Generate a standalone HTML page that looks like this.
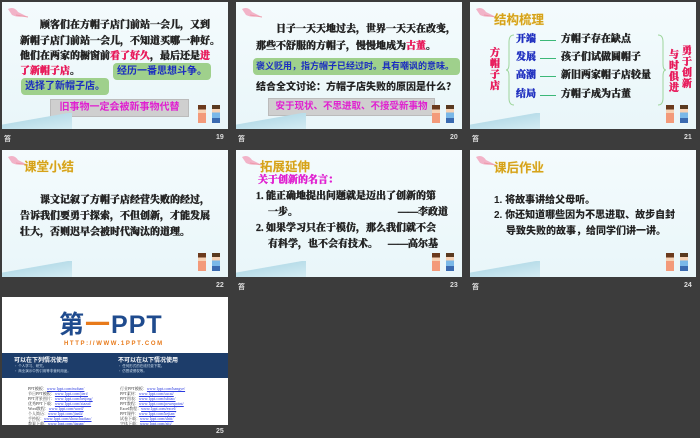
<!DOCTYPE html>
<html><head><meta charset="utf-8"><style>
*{margin:0;padding:0;box-sizing:border-box}
body{width:700px;height:438px;background:#3c3c3c;position:relative;overflow:hidden;font-family:"Liberation Serif","Noto Serif CJK SC",serif}
.s{position:absolute;width:226px;height:127px;background:linear-gradient(180deg,#f4fbfd,#e9f6f9);overflow:hidden}
.s div,.s span.a{position:absolute;white-space:nowrap}
.t{font-size:10px;font-weight:900;color:#222;line-height:12px;-webkit-text-stroke:0.35px currentColor}
.r{color:#e8195a}
.m{color:#e020d0}
.b{color:#2030c0}
.g{background:#9fd08c;border-radius:4px;font-size:10px;font-weight:bold;color:#1a2cc0;font-family:"Liberation Sans","Noto Sans CJK SC",sans-serif;line-height:17px;padding:0 4px}
.gb{background:#cfcfcf;border:1px solid #bbb;font-size:10px;font-weight:bold;color:#e020d0;font-family:"Liberation Sans","Noto Sans CJK SC",sans-serif;line-height:16px;text-align:center}
.h{font-size:12.5px;font-weight:bold;color:#d6a21a;font-family:"Liberation Sans","Noto Sans CJK SC",sans-serif;text-shadow:0 0 1px #f6e6a0}
.fl{position:absolute;left:4px;top:4px;width:22px;height:14px}
.sw{position:absolute;left:0;bottom:0;width:70px;height:16px;background:linear-gradient(170deg,transparent 40%,#b9dde9 42%,#d4ecf3 100%)}
.kid{position:absolute;width:8px;height:18px;bottom:6px}
.f{position:absolute;font-size:7px;color:#ddd;font-weight:bold;font-family:"Liberation Sans",sans-serif}
.lk{font-size:4px;color:#333;line-height:5px}
.lk u{color:#2a3ae0}
.sans{font-family:'Liberation Sans','Noto Sans CJK SC',sans-serif;-webkit-text-stroke:0}
</style></head><body>

<!-- Slide 19 -->
<div class="s" style="left:2px;top:2px">
<svg class="fl" viewBox="0 0 22 14"><path d="M2 3 Q8 0 12 6 L20 10 Q12 12 6 9 Z" fill="#f2b3c8"/><path d="M10 9 L22 11" stroke="#e9a" stroke-width="1"/></svg>
<div class="t" style="left:38px;top:18px">顾客们在方帽子店门前站一会儿，又到</div>
<div class="t" style="left:18px;top:34px">新帽子店门前站一会儿，不知道买哪一种好。</div>
<div class="t" style="left:18px;top:49px">他们在两家的橱窗前<span class="r">看了好久</span>，最后还是<span class="r">进</span></div>
<div class="t r" style="left:18px;top:64px">了新帽子店<span style="color:#222">。</span></div>
<div class="g" style="left:111px;top:61px">经历一番思想斗争。</div>
<div class="g" style="left:19px;top:76px">选择了新帽子店。</div>
<div class="gb" style="left:48px;top:97px;width:139px">旧事物一定会被新事物代替</div>
<div class="sw"></div>
<div class="kid" style="left:196px;background:linear-gradient(#6b3a1d 25%,#f7d2b5 25% 45%,#f39a7a 45%)"></div>
<div class="kid" style="left:210px;background:linear-gradient(#5a3a20 22%,#f7d2b5 22% 42%,#7ab8e8 42% 72%,#3a6ab0 72%)"></div>
</div>
<div class="f" style="left:4px;top:134px">笞</div><div class="f" style="left:216px;top:134px">19</div>

<!-- Slide 20 -->
<div class="s" style="left:236px;top:2px">
<svg class="fl" viewBox="0 0 22 14"><path d="M2 3 Q8 0 12 6 L20 10 Q12 12 6 9 Z" fill="#f2b3c8"/><path d="M10 9 L22 11" stroke="#e9a" stroke-width="1"/></svg>
<div class="t" style="left:40px;top:22px">日子一天天地过去，世界一天天在改变，</div>
<div class="t" style="left:20px;top:39px">那些不舒服的方帽子，慢慢地成为<span class="r">古董</span>。</div>
<div class="g" style="left:17px;top:56px;width:207px;font-size:9px;padding:0 3px">褒义贬用，指方帽子已经过时。具有嘲讽的意味。</div>
<div class="t sans" style="left:20px;top:80px;font-size:10px">结合全文讨论：方帽子店失败的原因是什么？</div>
<div class="gb" style="left:32px;top:96px;width:167px;font-size:9.5px">安于现状、不思进取、不接受新事物</div>
<div class="sw"></div>
<div class="kid" style="left:196px;background:linear-gradient(#6b3a1d 25%,#f7d2b5 25% 45%,#f39a7a 45%)"></div>
<div class="kid" style="left:210px;background:linear-gradient(#5a3a20 22%,#f7d2b5 22% 42%,#7ab8e8 42% 72%,#3a6ab0 72%)"></div>
</div>
<div class="f" style="left:238px;top:134px">笞</div><div class="f" style="left:450px;top:134px">20</div>

<!-- Slide 21 -->
<div class="s" style="left:470px;top:2px">
<svg class="fl" viewBox="0 0 22 14"><path d="M2 3 Q8 0 12 6 L20 10 Q12 12 6 9 Z" fill="#f2b3c8"/><path d="M10 9 L22 11" stroke="#e9a" stroke-width="1"/></svg>
<div class="h" style="left:24px;top:7px">结构梳理</div>
<div class="t r" style="left:20px;top:46px;width:11px;white-space:normal;line-height:11px">方帽子店</div>
<svg style="position:absolute;left:36px;top:32px" width="10" height="72"><path d="M8 1 Q3 1 3 8 L3 30 Q3 36 0 36 Q3 36 3 42 L3 64 Q3 71 8 71" fill="none" stroke="#9ed59c" stroke-width="1"/></svg>
<div class="t b" style="left:46px;top:32px">开端</div><div style="left:70px;top:38px;width:16px;height:1px;background:#3cb878"></div><div class="t" style="left:91px;top:32px">方帽子存在缺点</div>
<div class="t b" style="left:46px;top:50px">发展</div><div style="left:70px;top:56px;width:16px;height:1px;background:#3cb878"></div><div class="t" style="left:91px;top:50px">孩子们试做圆帽子</div>
<div class="t b" style="left:46px;top:68px">高潮</div><div style="left:70px;top:74px;width:16px;height:1px;background:#3cb878"></div><div class="t" style="left:91px;top:68px">新旧两家帽子店较量</div>
<div class="t b" style="left:46px;top:87px">结局</div><div style="left:70px;top:93px;width:16px;height:1px;background:#3cb878"></div><div class="t" style="left:91px;top:87px">方帽子成为古董</div>
<svg style="position:absolute;left:187px;top:32px" width="10" height="72"><path d="M1 1 Q6 1 6 8 L6 30 Q6 36 9 36 Q6 36 6 42 L6 64 Q6 71 1 71" fill="none" stroke="#9ed59c" stroke-width="1"/></svg>
<div class="t r" style="left:199px;top:48px;width:11px;white-space:normal;line-height:11px">与时俱进</div>
<div class="t r" style="left:212px;top:44px;width:11px;white-space:normal;line-height:11px">勇于创新</div>
<div class="sw"></div>
<div class="kid" style="left:196px;background:linear-gradient(#6b3a1d 25%,#f7d2b5 25% 45%,#f39a7a 45%)"></div>
<div class="kid" style="left:210px;background:linear-gradient(#5a3a20 22%,#f7d2b5 22% 42%,#7ab8e8 42% 72%,#3a6ab0 72%)"></div>
</div>
<div class="f" style="left:472px;top:134px">笞</div><div class="f" style="left:684px;top:134px">21</div>

<!-- Slide 22 -->
<div class="s" style="left:2px;top:150px">
<svg class="fl" viewBox="0 0 22 14"><path d="M2 3 Q8 0 12 6 L20 10 Q12 12 6 9 Z" fill="#f2b3c8"/><path d="M10 9 L22 11" stroke="#e9a" stroke-width="1"/></svg>
<div class="h" style="left:22px;top:6px">课堂小结</div>
<div class="t" style="left:38px;top:45px">课文记叙了方帽子店经营失败的经过，</div>
<div class="t" style="left:18px;top:61px">告诉我们要勇于探索，不但创新，才能发展</div>
<div class="t" style="left:18px;top:77px">壮大，否则迟早会被时代淘汰的道理。</div>
<div class="sw"></div>
<div class="kid" style="left:196px;background:linear-gradient(#6b3a1d 25%,#f7d2b5 25% 45%,#f39a7a 45%)"></div>
<div class="kid" style="left:210px;background:linear-gradient(#5a3a20 22%,#f7d2b5 22% 42%,#7ab8e8 42% 72%,#3a6ab0 72%)"></div>
</div>
<div class="f" style="left:216px;top:282px">22</div>

<!-- Slide 23 -->
<div class="s" style="left:236px;top:150px">
<svg class="fl" viewBox="0 0 22 14"><path d="M2 3 Q8 0 12 6 L20 10 Q12 12 6 9 Z" fill="#f2b3c8"/><path d="M10 9 L22 11" stroke="#e9a" stroke-width="1"/></svg>
<div class="h" style="left:24px;top:6px">拓展延伸</div>
<div class="t m" style="left:22px;top:25px">关于创新的名言：</div>
<div class="t" style="left:20px;top:41px">1. 能正确地提出问题就是迈出了创新的第</div>
<div class="t" style="left:32px;top:57px">一步。</div><div class="t" style="left:162px;top:57px">——李政道</div>
<div class="t" style="left:20px;top:73px">2. 如果学习只在于模仿，那么我们就不会</div>
<div class="t" style="left:32px;top:89px">有科学，也不会有技术。</div><div class="t" style="left:152px;top:89px">——高尔基</div>
<div class="sw"></div>
<div class="kid" style="left:196px;background:linear-gradient(#6b3a1d 25%,#f7d2b5 25% 45%,#f39a7a 45%)"></div>
<div class="kid" style="left:210px;background:linear-gradient(#5a3a20 22%,#f7d2b5 22% 42%,#7ab8e8 42% 72%,#3a6ab0 72%)"></div>
</div>
<div class="f" style="left:238px;top:282px">笞</div><div class="f" style="left:450px;top:282px">23</div>

<!-- Slide 24 -->
<div class="s" style="left:470px;top:150px">
<svg class="fl" viewBox="0 0 22 14"><path d="M2 3 Q8 0 12 6 L20 10 Q12 12 6 9 Z" fill="#f2b3c8"/><path d="M10 9 L22 11" stroke="#e9a" stroke-width="1"/></svg>
<div class="h" style="left:24px;top:7px">课后作业</div>
<div class="t sans" style="left:24px;top:45px">1. 将故事讲给父母听。</div>
<div class="t sans" style="left:24px;top:60px">2. 你还知道哪些因为不思进取、故步自封</div>
<div class="t sans" style="left:36px;top:76px">导致失败的故事，给同学们讲一讲。</div>
<div class="sw"></div>
<div class="kid" style="left:196px;background:linear-gradient(#6b3a1d 25%,#f7d2b5 25% 45%,#f39a7a 45%)"></div>
<div class="kid" style="left:210px;background:linear-gradient(#5a3a20 22%,#f7d2b5 22% 42%,#7ab8e8 42% 72%,#3a6ab0 72%)"></div>
</div>
<div class="f" style="left:472px;top:282px">笞</div><div class="f" style="left:684px;top:282px">24</div>

<!-- Slide 25 -->
<div class="s" style="left:2px;top:297px;height:128px;background:#fff">
<div style="left:57px;top:14px;font-size:25px;line-height:28px;font-weight:bold;color:#1f4b8e;font-family:'Liberation Sans','Noto Sans CJK SC',sans-serif;letter-spacing:1px">第<span style="color:#e87a1a">一</span>PPT</div>
<div style="left:62px;top:44px;font-size:6px;color:#e87a1a;font-family:'Liberation Sans',sans-serif;letter-spacing:1.6px;font-weight:bold">HTTP://WWW.1PPT.COM</div>
<div style="left:0;top:56px;width:226px;height:25px;background:#1d3d6a"></div>
<div style="left:12px;top:58px;font-size:6px;color:#fff;font-weight:bold;font-family:'Liberation Sans','Noto Sans CJK SC',sans-serif">可以在下列情况使用</div>
<div style="left:116px;top:58px;font-size:6px;color:#fff;font-weight:bold;font-family:'Liberation Sans','Noto Sans CJK SC',sans-serif">不可以在以下情况使用</div>
<div style="left:12px;top:67px;font-size:3.5px;color:#cde;font-family:'Noto Sans CJK SC',sans-serif">• 个人学习、研究。<br>• 商业演示中的引用等非营利用途。</div>
<div style="left:116px;top:67px;font-size:3.5px;color:#cde;font-family:'Noto Sans CJK SC',sans-serif">• 任何形式的在线付费下载。<br>• 仿冒或侵权等。</div>
<div class="lk" style="left:26px;top:89px">PPT模板：<u>www.1ppt.com/moban/</u><br>节日PPT模板：<u>www.1ppt.com/jieri/</u><br>PPT背景图片：<u>www.1ppt.com/beijing/</u><br>优秀PPT下载：<u>www.1ppt.com/xiazai/</u><br>Word教程：<u>www.1ppt.com/word/</u><br>个人简历：<u>www.1ppt.com/jianli/</u><br>手抄报：<u>www.1ppt.com/shouchaobao/</u><br>教案下载：<u>www.1ppt.com/jiaoan/</u></div>
<div class="lk" style="left:118px;top:89px">行业PPT模板：<u>www.1ppt.com/hangye/</u><br>PPT素材：<u>www.1ppt.com/sucai/</u><br>PPT图表：<u>www.1ppt.com/tubiao/</u><br>PPT教程：<u>www.1ppt.com/powerpoint/</u><br>Excel教程：<u>www.1ppt.com/excel/</u><br>PPT课件：<u>www.1ppt.com/kejian/</u><br>试卷下载：<u>www.1ppt.com/shiti/</u><br>字体下载：<u>www.1ppt.com/ziti/</u></div>
</div>
<div class="f" style="left:216px;top:428px">25</div>

</body></html>
